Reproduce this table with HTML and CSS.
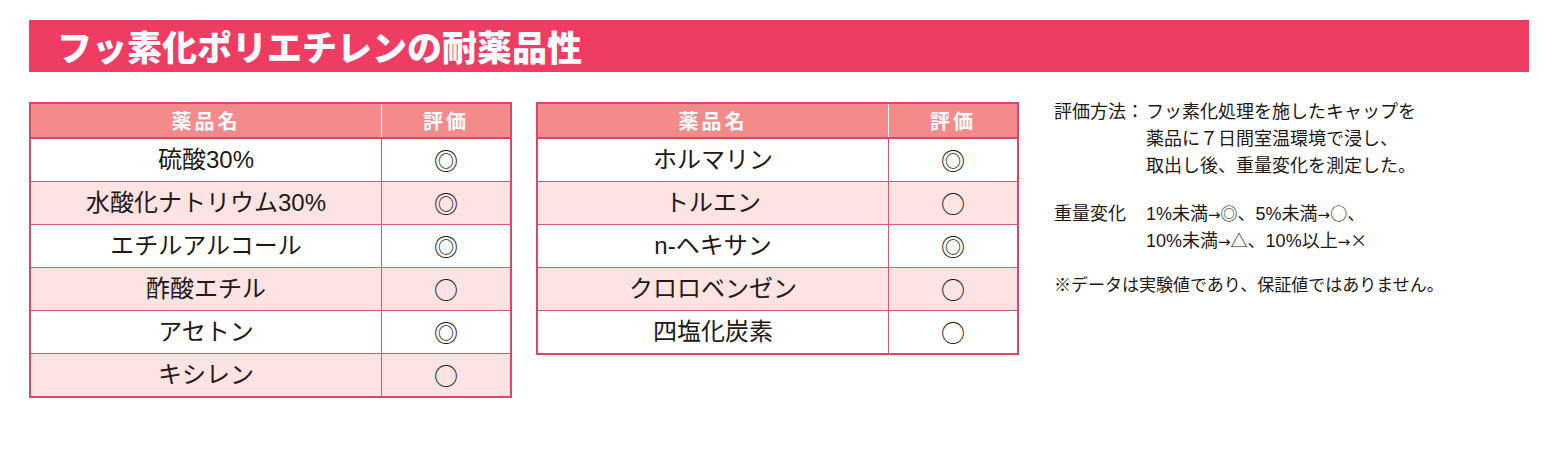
FILE: index.html
```html
<!DOCTYPE html>
<html lang="ja">
<head>
<meta charset="utf-8">
<link rel="stylesheet" href="styles.css">
</head>
<body>
<div class="page">
  <h1 class="title">フッ素化ポリエチレンの耐薬品性</h1>
  <div class="content">
    <table class="chem">
      <thead>
        <tr><th class="name">薬品名</th><th class="eval">評価</th></tr>
      </thead>
      <tbody>
        <tr><td>硫酸30%</td><td class="mark">◎</td></tr>
        <tr><td>水酸化ナトリウム30%</td><td class="mark">◎</td></tr>
        <tr><td>エチルアルコール</td><td class="mark">◎</td></tr>
        <tr><td>酢酸エチル</td><td class="mark">○</td></tr>
        <tr><td>アセトン</td><td class="mark">◎</td></tr>
        <tr><td>キシレン</td><td class="mark">○</td></tr>
      </tbody>
    </table>
    <table class="chem">
      <thead>
        <tr><th class="name">薬品名</th><th class="eval">評価</th></tr>
      </thead>
      <tbody>
        <tr><td>ホルマリン</td><td class="mark">◎</td></tr>
        <tr><td>トルエン</td><td class="mark">○</td></tr>
        <tr><td>n-ヘキサン</td><td class="mark">◎</td></tr>
        <tr><td>クロロベンゼン</td><td class="mark">○</td></tr>
        <tr><td>四塩化炭素</td><td class="mark">○</td></tr>
      </tbody>
    </table>
    <div class="notes">
      <div class="note">
        <div class="label">評価方法：</div>
        <div class="body">フッ素化処理を施したキャップを<br>薬品に７日間室温環境で浸し、<br>取出し後、重量変化を測定した。</div>
      </div>
      <div class="note">
        <div class="label">重量変化</div>
        <div class="body">1%未満<span class="arrow">→</span><span class="sym">◎</span>、5%未満<span class="arrow">→</span><span class="sym">○</span>、<br>10%未満<span class="arrow">→</span><span class="sym">△</span>、10%以上<span class="arrow">→</span><span class="sym">×</span></div>
      </div>
      <div class="footnote">※データは実験値であり、保証値ではありません。</div>
    </div>
  </div>
</div>
</body>
</html>
```

FILE: styles.css
```css
html, body {
  margin: 0;
  padding: 0;
  background: #ffffff;
}

body {
  font-family: "Liberation Sans", "Noto Sans CJK JP", sans-serif;
  color: #231815;
}

.page {
  padding: 20px 21px 0 29px;
}

.title {
  margin: 0;
  height: 52px;
  background: #ee3c63;
  color: #ffffff;
  font-family: "Noto Sans CJK JP", sans-serif;
  font-weight: 900;
  font-size: 35px;
  letter-spacing: 0;
  line-height: 52px;
  padding-left: 28px;
  width: 1500px;
  box-sizing: border-box;
}

.content {
  display: flex;
  align-items: flex-start;
  margin-top: 30px;
}

.chem {
  border-collapse: collapse;
  border: 2px solid #d9486c;
  margin-right: 24px;
}

.chem th {
  background: #f58a8b;
  color: #ffffff;
  font-family: "Noto Sans CJK JP", sans-serif;
  font-weight: 700;
  font-size: 20px;
  letter-spacing: 3px;
  height: 33px;
  padding: 0;
  border-bottom: 2px solid #d9486c;
  line-height: 1;
}

.chem th.name {
  width: 350px;
  border-right: 1px solid #ffffff;
}

.chem th.eval {
  width: 128px;
}

.chem td {
  height: 42px;
  padding: 0;
  text-align: center;
  font-size: 24px;
  line-height: 1;
  border-top: 1px solid #d65a78;
}

.chem td:first-child {
  border-right: 1px solid #d65a78;
}

.chem tbody tr:nth-child(even) td {
  background: #fde3e2;
}

.chem td.mark {
  font-family: "Noto Sans CJK JP", sans-serif;
  font-size: 24px;
}

.notes {
  margin-left: 11px;
  font-family: "Liberation Sans", "Noto Sans CJK JP", sans-serif;
  font-size: 18px;
  line-height: 27px;
  margin-top: -3px;
}

.note {
  display: flex;
  margin-bottom: 21px;
}

.note .label {
  width: 92px;
  flex: none;
}

.sym {
  font-family: "Noto Sans CJK JP", sans-serif;
  font-size: 17px;
  line-height: 1;
}

.arrow {
  font-family: "DejaVu Sans", sans-serif;
  font-size: 15px;
  line-height: 1;
}

.footnote {
  font-size: 17px;
  margin-top: -4px;
}
```
